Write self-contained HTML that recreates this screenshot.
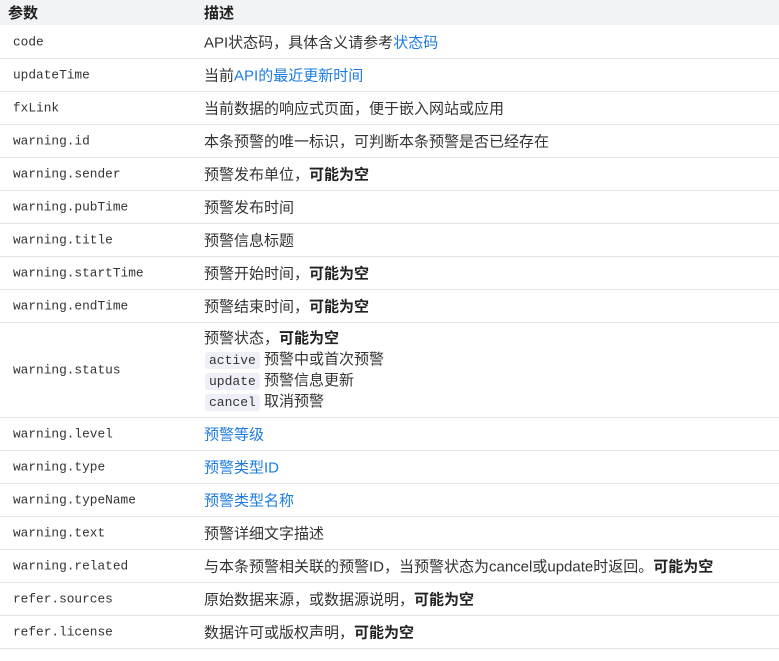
<!DOCTYPE html>
<html><head><meta charset="utf-8"><style>
body{margin:0;background:#fff;width:779px;height:661px;overflow:hidden;font-family:"Liberation Sans","Noto Sans CJK SC",sans-serif;color:#333;}
.h{position:absolute;left:0;top:0;width:779px;height:25px;background:#f2f3f5;font-weight:bold;font-size:15px;color:#222;}
.h span{position:absolute;top:2px;}
.r{position:absolute;left:0;width:779px;height:32px;border-bottom:1px solid #e3e3e3;font-size:15px;}
.k{position:absolute;left:13px;top:50%;transform:translateY(-50%);font-family:"Liberation Mono",monospace;font-size:12.8px;color:#333;}
.v{position:absolute;left:204px;top:50%;transform:translateY(-50%);white-space:nowrap;}
a{color:#1e7be0;text-decoration:none;}
b{color:#222;}
.c{font-family:"Liberation Mono",monospace;font-size:13px;background:#eff0f7;border-radius:3px;padding:1px 4px;margin-left:1px;}
.l{height:21px;line-height:21px;}
</style></head><body>
<div class="h"><span style="left:8px">参数</span><span style="left:204px">描述</span></div>
<div class="r" style="top:26px"><span class="k">code</span><span class="v">API状态码，具体含义请参考<a>状态码</a></span></div>
<div class="r" style="top:59px"><span class="k">updateTime</span><span class="v">当前<a>API的最近更新时间</a></span></div>
<div class="r" style="top:92px"><span class="k">fxLink</span><span class="v">当前数据的响应式页面，便于嵌入网站或应用</span></div>
<div class="r" style="top:125px"><span class="k">warning.id</span><span class="v">本条预警的唯一标识，可判断本条预警是否已经存在</span></div>
<div class="r" style="top:158px"><span class="k">warning.sender</span><span class="v">预警发布单位，<b>可能为空</b></span></div>
<div class="r" style="top:191px"><span class="k">warning.pubTime</span><span class="v">预警发布时间</span></div>
<div class="r" style="top:224px"><span class="k">warning.title</span><span class="v">预警信息标题</span></div>
<div class="r" style="top:257px"><span class="k">warning.startTime</span><span class="v">预警开始时间，<b>可能为空</b></span></div>
<div class="r" style="top:290px"><span class="k">warning.endTime</span><span class="v">预警结束时间，<b>可能为空</b></span></div>
<div class="r" style="top:323px;height:94px"><span class="k">warning.status</span><span class="v" style="top:5px;transform:none">
<div class="l">预警状态，<b>可能为空</b></div>
<div class="l"><span class="c">active</span> 预警中或首次预警</div>
<div class="l"><span class="c">update</span> 预警信息更新</div>
<div class="l"><span class="c">cancel</span> 取消预警</div></span></div>
<div class="r" style="top:418px"><span class="k">warning.level</span><span class="v"><a>预警等级</a></span></div>
<div class="r" style="top:451px"><span class="k">warning.type</span><span class="v"><a>预警类型ID</a></span></div>
<div class="r" style="top:484px"><span class="k">warning.typeName</span><span class="v"><a>预警类型名称</a></span></div>
<div class="r" style="top:517px"><span class="k">warning.text</span><span class="v">预警详细文字描述</span></div>
<div class="r" style="top:550px"><span class="k">warning.related</span><span class="v">与本条预警相关联的预警ID，当预警状态为cancel或update时返回。<b>可能为空</b></span></div>
<div class="r" style="top:583px"><span class="k">refer.sources</span><span class="v">原始数据来源，或数据源说明，<b>可能为空</b></span></div>
<div class="r" style="top:616px"><span class="k">refer.license</span><span class="v">数据许可或版权声明，<b>可能为空</b></span></div>
</body></html>
